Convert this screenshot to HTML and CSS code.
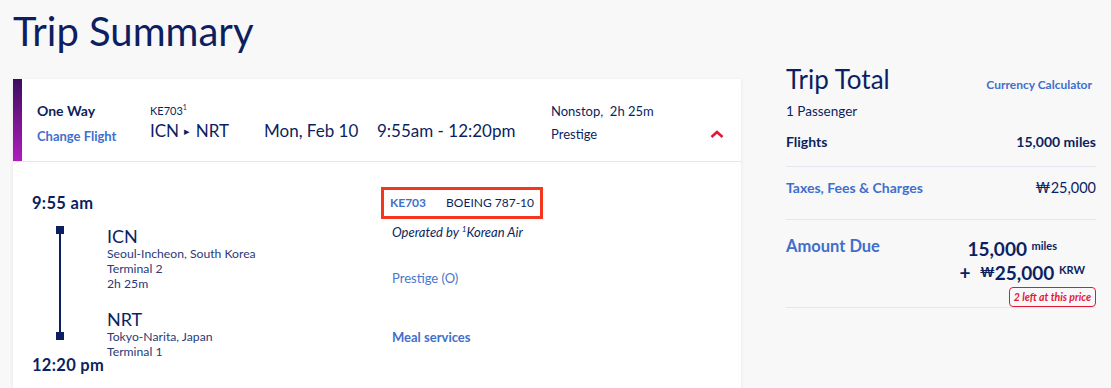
FILE: index.html
```html
<!DOCTYPE html>
<html lang="en">
<head>
    <meta charset="UTF-8">
    <meta name="viewport" content="width=device-width, initial-scale=1.0">
    <title>Trip Summary</title>
    <link rel="stylesheet" href="styles.css">
</head>
<body>
    <div id="page">
        <h1>Trip Summary</h1>

        <div id="layout">
            <div id="trip-card">
                <div class="card-header">
                    <div class="col col-type">
                        <div class="trip-type">One Way</div>
                        <a class="change-link" href="#">Change Flight</a>
                    </div>
                    <div class="col col-route">
                        <div class="flight-no">KE703<sup>1</sup></div>
                        <div class="route">ICN <span class="arrow">&#9656;</span> NRT</div>
                    </div>
                    <div class="col col-date">Mon, Feb 10</div>
                    <div class="col col-time">9:55am - 12:20pm</div>
                    <div class="col col-info">
                        <div>Nonstop,&nbsp; 2h 25m</div>
                        <div class="cabin">Prestige</div>
                    </div>
                    <div class="col col-toggle">
                        <svg width="14" height="8" viewBox="0 0 14 8">
                            <path d="M1.5 7 L7 2 L12.5 7" fill="none" stroke="#e31837" stroke-width="2.6"/>
                        </svg>
                    </div>
                </div>

                <div class="card-body">
                    <div class="segment">
                        <div class="time">9:55 am</div>
                        <div class="stops">
                            <div class="timeline">
                                <span class="dot"></span>
                                <span class="line"></span>
                                <span class="dot"></span>
                            </div>
                            <div class="airports">
                                <div class="airport">
                                    <div class="code">ICN</div>
                                    <div class="place">Seoul-Incheon, South Korea</div>
                                    <div class="place">Terminal 2</div>
                                    <div class="place">2h 25m</div>
                                </div>
                                <div class="airport arrive">
                                    <div class="code">NRT</div>
                                    <div class="place">Tokyo-Narita, Japan</div>
                                    <div class="place">Terminal 1</div>
                                </div>
                            </div>
                        </div>
                        <div class="time time-end">12:20 pm</div>
                    </div>

                    <div class="details">
                        <div class="aircraft-box">
                            <span class="flight-link">KE703</span>
                            <span class="aircraft">BOEING 787-10</span>
                        </div>
                        <div class="operated">Operated by <sup>1</sup>Korean Air</div>
                        <div class="fare-class">Prestige (O)</div>
                        <div class="meal">Meal services</div>
                    </div>
                </div>
            </div>

            <div id="totals">
                <div class="totals-head">
                    <h2>Trip Total</h2>
                    <a class="calc-link" href="#">Currency Calculator</a>
                </div>
                <div class="passengers">1 Passenger</div>

                <div class="total-row">
                    <span class="row-label">Flights</span>
                    <span class="row-value">15,000 miles</span>
                </div>
                <div class="total-row taxes">
                    <span class="row-label link">Taxes, Fees &amp; Charges</span>
                    <span class="row-value plain">&#8361;25,000</span>
                </div>
                <div class="total-row due">
                    <span class="row-label link big">Amount Due</span>
                    <div class="due-amounts">
                        <div class="due-miles">15,000 <sup>miles</sup></div>
                        <div class="due-cash">+&nbsp;&nbsp;<sup class="won">&#8361;</sup>25,000 <sup>KRW</sup></div>
                        <span class="seats-left">2 left at this price</span>
                    </div>
                </div>
            </div>
        </div>
    </div>
</body>
</html>
```

FILE: styles.css
```css
body {
    background-color: #f8f8f9;
    font-family: Lato, "Open Sans", sans-serif;
    color: #0c1f60;
    margin: 0;
    padding: 0;
}

a {
    text-decoration: none;
}

#page {
    padding: 0 15px 0 13px;
}

h1 {
    font-size: 40px;
    font-weight: 400;
    line-height: 50px;
    margin: 6px 0 0 0;
}

#layout {
    display: flex;
    gap: 45px;
    margin-top: 23px;
}

/* flight card */

#trip-card {
    width: 728px;
    flex-shrink: 0;
    background-color: #ffffff;
    box-shadow: 0 1px 4px rgba(0, 0, 0, 0.08);
    height: 320px;
}

.card-header {
    display: flex;
    height: 82px;
    box-sizing: border-box;
    padding-top: 22px;
    border-left: 9px solid #7a1a9a;
    border-image: linear-gradient(to bottom, #3a0c5e, #b21bbf) 1;
    border-top: 0;
    border-right: 0;
    border-bottom: 0;
    box-shadow: 0 1px 0 #e3e8ef;
}

.col {
    line-height: 20px;
}

.col-type {
    width: 113px;
    padding-left: 15px;
}

.trip-type {
    font-size: 14px;
    font-weight: 700;
}

.change-link {
    display: block;
    margin-top: 5px;
    font-size: 13px;
    font-weight: 700;
    color: #3f6fcb;
}

.col-route {
    width: 114px;
}

.flight-no {
    font-size: 11px;
}

.flight-no sup {
    font-size: 7px;
    line-height: 0;
}

.route {
    font-size: 17px;
    line-height: 20px;
}

.arrow {
    font-size: 11px;
    position: relative;
    top: -2px;
    margin: 0 1px;
}

.col-date,
.col-time {
    font-size: 17px;
    margin-top: 20px;
}

.col-date {
    width: 113px;
}

.col-time {
    width: 174px;
}

.col-info {
    font-size: 13px;
    width: 159px;
}

.cabin {
    margin-top: 3px;
}

.col-toggle {
    padding-top: 21px;
}

.card-body {
    display: flex;
    padding-top: 32px;
}

.segment {
    width: 349px;
    padding-left: 19px;
}

.time {
    font-size: 16.5px;
    font-weight: 700;
    line-height: 20px;
    letter-spacing: 0.3px;
}

.time-end {
    margin-top: -4px;
}

.stops {
    display: flex;
    margin-top: 13px;
}

.timeline {
    display: flex;
    flex-direction: column;
    align-items: center;
    width: 8px;
    padding-left: 24px;
    margin-right: 43px;
}

.dot {
    width: 8px;
    height: 8px;
    background-color: #0c1f60;
}

.line {
    width: 2px;
    height: 98px;
    background-color: #0c1f60;
}

.code {
    font-size: 18px;
    line-height: 20px;
}

.place {
    font-size: 12.2px;
    line-height: 15px;
    color: #2a3a78;
}

.arrive {
    margin-top: 18px;
}

.details {
    margin-top: -6px;
}

.aircraft-box {
    display: inline-block;
    border: 3px solid #f4371c;
    padding: 5px 6px 5px 6px;
    font-size: 12px;
    line-height: 16px;
}

.flight-link {
    font-weight: 700;
    color: #3f6fcb;
    margin-right: 17px;
}

.operated {
    font-size: 13px;
    font-style: italic;
    margin-top: 4px;
    padding-left: 11px;
    line-height: 18px;
}

.operated sup {
    font-size: 8px;
    line-height: 0;
}

.fare-class {
    font-size: 13px;
    color: #4a76cc;
    margin-top: 29px;
    padding-left: 11px;
}

.meal {
    font-size: 13px;
    font-weight: 700;
    color: #3f6fcb;
    margin-top: 43px;
    padding-left: 11px;
}

/* trip total */

#totals {
    flex: 1;
    margin-top: -17px;
}

.totals-head {
    display: flex;
    justify-content: space-between;
    align-items: baseline;
}

h2 {
    font-size: 26px;
    font-weight: 400;
    margin: 0;
    line-height: 34px;
}

.calc-link {
    font-size: 12px;
    font-weight: 700;
    color: #3f6fcb;
    margin-right: 4px;
}

.passengers {
    font-size: 13.5px;
    margin-top: 5px;
    line-height: 20px;
}

.total-row {
    display: flex;
    justify-content: space-between;
    border-bottom: 1px solid #e3e8ef;
    padding: 12px 0 15px 0;
    font-size: 14px;
    font-weight: 700;
    line-height: 18px;
}

.total-row.taxes {
    padding: 12px 0 22px 0;
}

.row-label.link {
    color: #3f6fcb;
}

.row-label.big {
    font-size: 16.5px;
}

.row-value.plain {
    font-weight: 400;
    font-size: 14.5px;
}

.total-row.due {
    padding: 17px 0 0 0;
}

.due-amounts {
    display: flex;
    flex-direction: column;
    align-items: flex-end;
    font-size: 19px;
    line-height: 24px;
}

.due-amounts sup {
    font-size: 11px;
    vertical-align: 6px;
    line-height: 0;
}

.due-miles {
    margin-right: 39px;
}

.due-cash {
    margin-right: 11px;
}

.due-amounts sup.won {
    font-size: 14px;
    vertical-align: 3px;
}

.seats-left {
    margin-top: 2px;
    font-size: 10.5px;
    font-weight: 700;
    font-style: italic;
    color: #e31837;
    border: 1px solid #e31837;
    border-radius: 4px;
    line-height: 18px;
    padding: 0 4px;
}
```
